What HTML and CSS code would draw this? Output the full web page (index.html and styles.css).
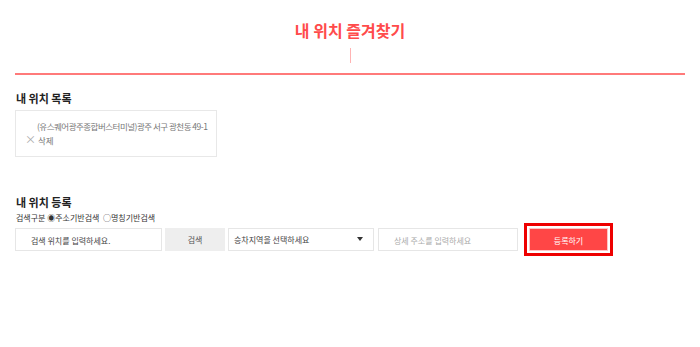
FILE: index.html
```html
<!DOCTYPE html>
<html>
<head>
<meta charset="UTF-8">
<title>내 위치 즐겨찾기</title>
<link rel="stylesheet" href="styles.css">
</head>
<body>
	<div id="wrap">
		<div class="title">
			<h1>내 위치 즐겨찾기</h1>
			<span class="bar"></span>
		</div>

		<h2 class="sub">내 위치 목록</h2>
		<div class="list">
			<p class="addr">(유스퀘어광주종합버스터미널)광주 서구 광천동 49-1</p>
			<p class="del"><span class="x">×</span> 삭제</p>
		</div>

		<h2 class="sub reg">내 위치 등록</h2>
		<div class="kind">
			검색구분 <span class="radio">◉</span>주소기반검색&nbsp; <span class="radio">○</span>명칭기반검색
		</div>
		<div class="row">
			<div class="inp w1">검색 위치를 입력하세요.</div>
			<div class="btn-gray">검색</div>
			<div class="sel">승차지역을 선택하세요 <span class="arr"></span></div>
			<div class="inp w2 ph">상세 주소를 입력하세요</div>
			<div class="btn-wrap"><div class="btn-red">등록하기</div></div>
		</div>
	</div>
</body>
</html>
```

FILE: styles.css
```css
body, div, h1, h2, p {
	margin: 0;
	padding: 0;
}

body {
	font-family: "Noto Sans CJK KR", "Noto Sans", sans-serif;
	color: #222;
	background: #fff;
}

#wrap {
	padding: 0 15px;
}

.title {
	height: 73px;
	border-bottom: 2px solid #ff7a7a;
	display: flex;
	flex-direction: column;
	align-items: center;
}

.title h1 {
	margin-top: 19px;
	font-size: 16px;
	line-height: 22px;
	font-weight: bold;
	color: #ff4b4b;
}

.bar {
	display: block;
	width: 1px;
	height: 15px;
	margin-top: 7px;
	background: #ffb3b3;
}

.sub {
	font-size: 11px;
	line-height: 14px;
	font-weight: bold;
	color: #222;
	margin-top: 16px;
	margin-left: 1px;
}

.list {
	width: 200px;
	height: 45px;
	margin-top: 5px;
	border: 1px solid #e8e8e8;
	font-size: 8.5px;
	line-height: 12px;
	color: #777;
}

.addr {
	margin-top: 9px;
	padding-left: 21px;
	letter-spacing: -0.5px;
	white-space: nowrap;
}

.del {
	margin-top: 1px;
	padding-left: 9px;
}

.x {
	color: #aaa;
	font-size: 11px;
}

.reg {
	margin-top: 38px;
}

.kind {
	font-size: 8px;
	line-height: 12px;
	margin-top: 3px;
	margin-left: 1px;
	color: #333;
}

.radio {
	font-size: 8px;
}

.row {
	display: flex;
	align-items: center;
	margin-top: -2px;
	height: 34px;
	font-size: 8px;
	color: #444;
}

.inp, .sel, .btn-gray {
	height: 23px;
	line-height: 23px;
	box-sizing: border-box;
}

.inp {
	border: 1px solid #e6e6e6;
	padding-left: 15px;
}

.w1 {
	width: 147px;
}

.w2 {
	width: 140px;
	margin-left: 4px;
	padding-left: 15px;
}

.ph {
	color: #aaa;
}

.btn-gray {
	width: 60px;
	margin-left: 3px;
	background: #eeeeee;
	text-align: center;
	color: #555;
}

.sel {
	width: 146px;
	margin-left: 3px;
	border: 1px solid #e6e6e6;
	padding-left: 5px;
	padding-right: 10px;
	display: flex;
	justify-content: space-between;
	align-items: center;
	line-height: 21px;
	color: #444;
}

.arr {
	width: 0;
	height: 0;
	border-left: 3px solid transparent;
	border-right: 3px solid transparent;
	border-top: 4px solid #333;
}

.btn-wrap {
	margin-left: 6px;
	border: 3px solid #ee0000;
	padding: 2px;
	background: #fff;
}

.btn-red {
	width: 79px;
	height: 23px;
	line-height: 23px;
	background: #ff4646;
	border: 1px solid #ffc4c4;
	box-sizing: border-box;
	color: #fff;
	text-align: center;
}
```
